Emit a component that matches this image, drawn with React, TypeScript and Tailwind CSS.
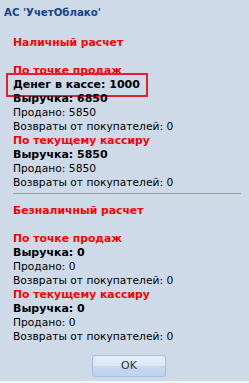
import React from 'react';

type Block = {
  title: string;
  cash?: number;
  revenue: number;
  sold: number;
  returns: number;
};

const Section = ({ title, blocks }: { title: string; blocks: Block[] }) => (
  <div className="flex flex-col">
    <div className="h-[14px] leading-[14px] text-[10.8px] font-bold text-[#ff0000]">{title}</div>
    <div className="h-[14px]" />
    {blocks.map((b, i) => (
      <div key={i} className="flex flex-col">
        <div className="h-[14px] leading-[14px] text-[10.8px] font-bold text-[#ff0000]">{b.title}</div>
        {b.cash !== undefined && (
          <div className="-mx-[7px] -my-[5px] w-[142px] border-2 border-[#e3212b] px-[5px] py-[3px]">
            <div className="h-[14px] leading-[14px] text-[11px] font-bold text-black">Денег в кассе: {b.cash}</div>
          </div>
        )}
        <div className="h-[14px] leading-[14px] text-[11px] font-bold text-black">Выручка: {b.revenue}</div>
        <div className="h-[14px] leading-[14px] text-black">Продано: {b.sold}</div>
        <div className="h-[14px] leading-[14px] text-black">Возвраты от покупателей: {b.returns}</div>
      </div>
    ))}
  </div>
);

export default function App() {
  return (
    <div
      className="flex h-[383px] w-[249px] flex-col bg-[#cedae7] text-[10.7px]"
      style={{ fontFamily: '"DejaVu Sans", Tahoma, sans-serif' }}
    >
      <div className="flex h-[25px] items-center pl-[4px] text-[10.2px] font-bold text-[#15428b]">
        АС 'УчетОблако'
      </div>
      <div className="flex flex-1 flex-col px-[13px] pt-[11px]">
        <Section
          title="Наличный расчет"
          blocks={[
            { title: 'По точке продаж', cash: 1000, revenue: 6850, sold: 5850, returns: 0 },
            { title: 'По текущему кассиру', revenue: 5850, sold: 5850, returns: 0 },
          ]}
        />
        <div className="mb-[10px] mt-[3px] h-px w-[228px] bg-[#9a9ea4]" />
        <Section
          title="Безналичный расчет"
          blocks={[
            { title: 'По точке продаж', revenue: 0, sold: 0, returns: 0 },
            { title: 'По текущему кассиру', revenue: 0, sold: 0, returns: 0 },
          ]}
        />
        <div className="mt-[11px] flex justify-center pl-[9px]">
          <button className="flex h-[22px] w-[74px] items-center justify-center rounded-[3px] border border-[#a3bfe3] bg-[linear-gradient(#e4eefa_0%,#dce8f7_48%,#c6d8ef_52%,#c2d5ee_100%)] text-[11px] text-[#333]">
            OK
          </button>
        </div>
      </div>
      <div className="h-[2px] bg-[#f2f6fb]" />
    </div>
  );
}
